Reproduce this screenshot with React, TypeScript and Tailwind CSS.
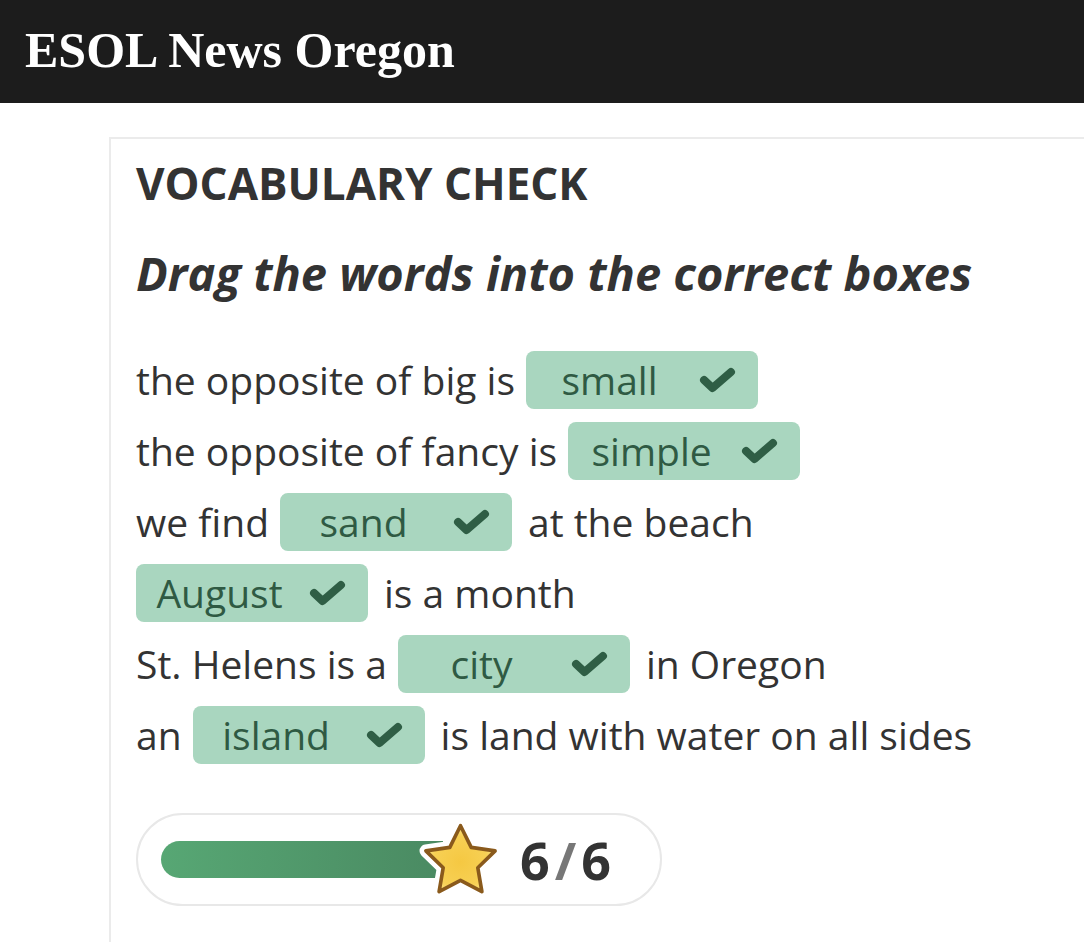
const rows: { before?: string; word: string; after?: string }[] = [
  { before: 'the opposite of big is', word: 'small' },
  { before: 'the opposite of fancy is', word: 'simple' },
  { before: 'we find', word: 'sand', after: 'at the beach' },
  { word: 'August', after: 'is a month' },
  { before: 'St. Helens is a', word: 'city', after: 'in Oregon' },
  { before: 'an', word: 'island', after: 'is land with water on all sides' },
];

function Check() {
  return (
    <svg viewBox="0 0 37 26" className="w-[37px] h-[26px] mr-[22px]">
      <polyline
        points="5,13 13.5,21 32,5"
        fill="none"
        stroke="#2f5e45"
        strokeWidth="8"
        strokeLinecap="round"
        strokeLinejoin="round"
      />
    </svg>
  );
}

function Chip({ word }: { word: string }) {
  return (
    <div className="flex items-center w-[232px] h-[58px] rounded-[8px] bg-[#a9d6bf] text-[#2f5a43]">
      <span className="flex-1 text-center pr-[6px]">{word}</span>
      <Check />
    </div>
  );
}

function Star() {
  const pts =
    '50,14 61.76,37.82 88.04,41.64 69.02,60.18 73.51,86.36 50,74 26.49,86.36 30.98,60.18 11.96,41.64 38.24,37.82';
  return (
    <svg viewBox="0 0 100 100" className="w-[91px] h-[91px]">
      <defs>
        <radialGradient id="starFill" cx="50%" cy="55%" r="55%">
          <stop offset="0%" stopColor="#f5c842" />
          <stop offset="70%" stopColor="#f7d054" />
          <stop offset="100%" stopColor="#fbe58a" />
        </radialGradient>
      </defs>
      <polygon points={pts} fill="#fff" stroke="#fff" strokeWidth="14" strokeLinejoin="round" />
      <polygon points={pts} fill="url(#starFill)" stroke="#8a5a1c" strokeWidth="4" strokeLinejoin="round" />
    </svg>
  );
}

export default function App() {
  return (
    <div className="min-h-screen bg-white font-['Open_Sans',sans-serif] text-[#333]">
      <header className="h-[103px] bg-[#1c1c1c] flex items-center px-[25px]">
        <h1 className="font-['Liberation_Serif',serif] font-bold text-white text-[50px] leading-none mt-[-4px]">
          ESOL News Oregon
        </h1>
      </header>
      <main className="ml-[109px] mt-[34px] border-t-2 border-l-2 border-[#ebebeb] pl-[25px] pt-[18px] pb-[40px]">
        <h2 className="font-bold text-[44px] leading-[52px] uppercase">Vocabulary Check</h2>
        <p className="font-bold italic text-[47px] leading-[56px] mt-[36px]">
          Drag the words into the correct boxes
        </p>
        <div className="mt-[50px] flex flex-col gap-[13px] text-[39px]">
          {rows.map((r, i) => (
            <div key={i} className="flex items-center gap-[11px] h-[58px]">
              {r.before && <span>{r.before}</span>}
              <Chip word={r.word} />
              {r.after && <span className="ml-[5px]">{r.after}</span>}
            </div>
          ))}
        </div>
        <div className="mt-[49px] w-[526px] h-[93px] rounded-full border-2 border-[#e8e8e8] flex items-center pl-[23px]">
          <div className="relative w-[282px] h-[37px]">
            <div className="h-full rounded-l-full bg-gradient-to-r from-[#57a774] to-[#4a8a62]" />
            <div className="absolute left-[254px] top-[-28px]">
              <Star />
            </div>
          </div>
          <div className="ml-[77px] font-bold text-[52px] leading-none tracking-[5px]">
            6<span className="text-[#777]">/</span>6
          </div>
        </div>
      </main>
    </div>
  );
}
